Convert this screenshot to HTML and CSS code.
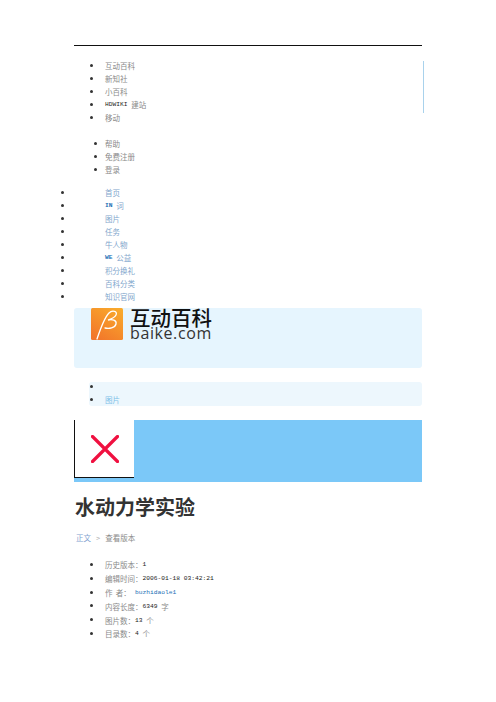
FILE: index.html
```html
<!DOCTYPE html>
<html lang="zh">
<head>
<meta charset="utf-8">
<title>水动力学实验</title>
<link rel="stylesheet" href="styles.css">
</head>
<body>
<div class="column">
  <div class="rule"></div>
  <div class="top-block">
    <ul class="list list-a">
      <li>互动百科</li>
      <li>新知社</li>
      <li>小百科</li>
      <li><span class="mono">HDWIKI</span> 建站</li>
      <li>移动</li>
    </ul>
    <div class="side-line"></div>
  </div>
  <ul class="list list-b">
    <li>帮助</li>
    <li>免费注册</li>
    <li>登录</li>
  </ul>
</div>
<ul class="list list-c">
  <li>首页</li>
  <li><span class="mono strong">IN</span> 词</li>
  <li>图片</li>
  <li>任务</li>
  <li>牛人物</li>
  <li><span class="mono strong">WE</span> 公益</li>
  <li>积分换礼</li>
  <li>百科分类</li>
  <li>知识官网</li>
</ul>
<div class="column">
  <div class="banner">
    <div class="logo">
      <svg class="logo-mark" viewBox="0 0 32 32" width="32" height="32" aria-hidden="true">
        <defs>
          <linearGradient id="orange" x1="0.8" y1="0" x2="0.2" y2="1">
            <stop offset="0" stop-color="#f9a92c"/>
            <stop offset="1" stop-color="#f2762a"/>
          </linearGradient>
        </defs>
        <rect width="32" height="32" rx="1.5" fill="url(#orange)"/>
        <path d="M6 31C9 22 13 10 18 5C21 2 27 3 25 7C23.500 10 20 11 17 12C21 11 26 12 25 16C24 20 18 21 14 20" fill="none" stroke="#fff" stroke-width="1.300" stroke-linecap="round"/>
      </svg>
      <div class="logo-text">
        <span class="logo-cn">互动百科</span>
        <span class="logo-en">baike.com</span>
      </div>
    </div>
  </div>
  <div class="subbar">
    <ul class="list list-d">
      <li></li>
      <li>图片</li>
    </ul>
  </div>
  <div class="image-bar">
    <div class="broken">
      <svg viewBox="0 0 28 28" width="28" height="28" aria-hidden="true">
        <path d="M1.500 1.500L26.500 26.500M26.500 1.500L1.500 26.500" stroke="#f01040" stroke-width="3.200" stroke-linecap="round" fill="none"/>
      </svg>
    </div>
  </div>
  <h1 class="title">水动力学实验</h1>
  <div class="crumbs"><span class="crumb-link">正文</span><span class="crumb-sep">&gt;</span><span>查看版本</span></div>
  <ul class="list list-e">
    <li>历史版本：<span class="mono">1</span></li>
    <li>编辑时间：<span class="mono">2006-01-18 03:42:21</span></li>
    <li>作&nbsp;&nbsp;者：<a class="author mono">buzhidaole1</a></li>
    <li>内容长度：<span class="mono">6349</span> 字</li>
    <li>图片数：<span class="mono">13</span> 个</li>
    <li>目录数：<span class="mono">4</span> 个</li>
  </ul>
</div>
</body>
</html>
```
FILE: styles.css
```css
* { box-sizing: border-box; }
html, body { margin: 0; padding: 0; background: #fff; }
body {
  padding-top: 45px;
  font-family: "Noto Sans CJK SC", "Liberation Sans", sans-serif;
  font-size: 7.5px;
  color: #8a8a8a;
  height: 702px;
  overflow: hidden;
}
.column { margin: 0 74px; width: 348px; }
.rule { height: 1px; background: #111; }
.top-block { display: flex; justify-content: space-between; margin-top: 13px; width: 350px; }
.side-line { width: 1px; height: 52px; background: #a9d2ec; margin-top: 2px; }

.list { list-style: none; margin: 0; padding: 0; }
.list li { display: flex; align-items: center; height: 13px; position: relative; white-space: pre; }
.list li::before {
  content: "";
  width: 3px;
  height: 3px;
  border-radius: 50%;
  background: #333;
  position: absolute;
  top: 5px;
}
.mono { font-family: "Liberation Mono", monospace; font-size: 6.250px; color: #222; margin-right: 2px; }
.strong { font-weight: bold; color: #1a6fb5; }

.list-a { padding-left: 31px; }
.list-a li::before { left: -15px; }
.list-b { padding-left: 31px; margin-top: 13px; }
.list-b li::before { left: -11px; }
.list-c { padding-left: 105px; margin-top: 10px; color: #7fa6cc; }
.list-c li::before { left: -44px; }

.banner {
  margin-top: 5px;
  height: 60px;
  background: #e6f5fe;
  border-radius: 3px;
  padding-left: 17px;
}
.logo { display: flex; gap: 7px; height: 32px; }
.logo-mark { display: block; }
.logo-text { display: flex; flex-direction: column; width: 84px; }
.logo-cn { font-size: 20.500px; line-height: 18px; height: 19px; color: #111; font-weight: 500; white-space: nowrap; }
.logo-en { font-family: "Open Sans", sans-serif; font-size: 16px; line-height: 13px; height: 13px; letter-spacing: 0.600px; color: #333; white-space: nowrap; }

.subbar {
  margin: 14px 0 0 15px;
  height: 24px;
  background: #edf7fd;
  border-radius: 3px;
  display: flex;
  flex-direction: column;
}
.list-d { padding-left: 16px; margin-top: -2px; color: #7cc0e8; }
.list-d li::before { left: -15px; }

.image-bar { margin-top: 14px; height: 62px; background: #7bc8f8; }
.broken {
  width: 60px;
  height: 58px;
  background: #fff;
  border-left: 1px solid #111;
  border-bottom: 1px solid #111;
  display: flex;
  align-items: center;
  justify-content: center;
}
.broken svg { display: block; }

.title { margin: 11px 0 0 1px; font-size: 20px; line-height: 28px; font-weight: 700; color: #333; }
.crumbs { display: flex; margin: 10px 0 0 2px; height: 13px; align-items: center; }
.crumb-link { color: #7f9fd0; }
.crumb-sep { margin: 0 5px; color: #b0b0b0; }

.list-e { padding-left: 31px; margin-top: 14px; }
.list-e li { height: 13.800px; }
.list-e li::before { left: -15px; }
.author { color: #1a6fb5; margin-left: 4px; }
```
